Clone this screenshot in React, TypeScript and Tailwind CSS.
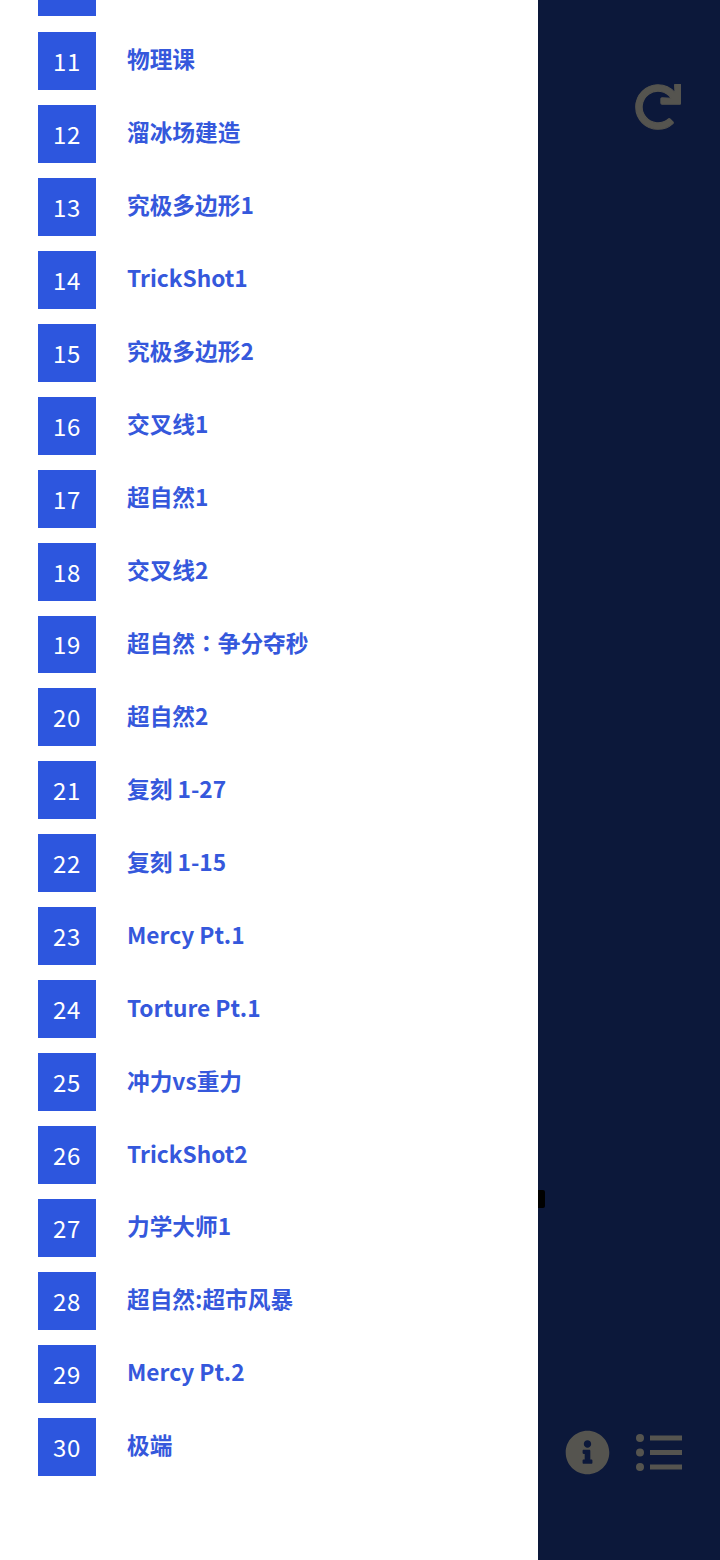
import React from 'react';
import { FaInfoCircle, FaRedo } from 'react-icons/fa';

const levels: { id: number; name: React.ReactNode }[] = [
  { id: 11, name: '物理课' },
  { id: 12, name: '溜冰场建造' },
  { id: 13, name: '究极多边形1' },
  { id: 14, name: 'TrickShot1' },
  { id: 15, name: '究极多边形2' },
  { id: 16, name: '交叉线1' },
  { id: 17, name: '超自然1' },
  { id: 18, name: '交叉线2' },
  // the full-width colon sits centered in the reference, as the TC font draws it
  { id: 19, name: <>超自然<span className="font-['Noto_Sans_CJK_TC']">：</span>争分夺秒</> },
  { id: 20, name: '超自然2' },
  { id: 21, name: '复刻 1-27' },
  { id: 22, name: '复刻 1-15' },
  { id: 23, name: 'Mercy Pt.1' },
  { id: 24, name: 'Torture Pt.1' },
  { id: 25, name: '冲力vs重力' },
  { id: 26, name: 'TrickShot2' },
  { id: 27, name: '力学大师1' },
  { id: 28, name: '超自然:超市风暴' },
  { id: 29, name: 'Mercy Pt.2' },
  { id: 30, name: '极端' },
];

function ListIcon() {
  return (
    <svg width="48" height="40" viewBox="0 0 48 40" fill="currentColor">
      <circle cx="5" cy="5" r="4" />
      <circle cx="5" cy="19.5" r="4" />
      <circle cx="5" cy="34" r="4" />
      <rect x="15" y="2.5" width="32" height="5" />
      <rect x="15" y="17" width="32" height="5" />
      <rect x="15" y="31.5" width="32" height="5" />
    </svg>
  );
}

export default function App() {
  return (
    <div className="relative flex h-[1560px] w-[720px] overflow-hidden bg-[#0c183a] font-['Noto_Sans_CJK_SC',sans-serif]">
      {/* level drawer, scrolled so row 10 is cut off at the top */}
      <div className="w-[538px] shrink-0 overflow-hidden bg-white">
        <div className="mb-[16px] ml-[38px] h-[16px] w-[58px] bg-[#2d56de]" />
        <div className="ml-[38px] flex flex-col gap-[15px]">
          {levels.map((level) => (
            <div key={level.id} className="flex h-[57.95px] items-center">
              <div className="flex h-[57.95px] w-[58px] shrink-0 items-center justify-center text-[24px] tracking-[0.8px] text-white bg-[#2d56de]">
                {level.id}
              </div>
              <span className="ml-[31px] -mt-[3px] text-[22.7px] font-bold text-[#3558dc]">{level.name}</span>
            </div>
          ))}
        </div>
      </div>

      {/* game panel behind the drawer */}
      <div className="flex flex-1 flex-col justify-between pt-[84px] pb-[85px] pr-[37px] text-[#55544f]">
        <div className="flex justify-end">
          <FaRedo className="mr-[2px] h-[46px] w-[46px]" stroke="currentColor" strokeWidth={12} />
        </div>
        <div className="flex items-center justify-end gap-[25px]">
          <FaInfoCircle className="h-[45px] w-[45px]" />
          <ListIcon />
        </div>
      </div>

      <div className="absolute left-[538px] top-[1190px] h-[18px] w-[7px] rounded-r-[2px] bg-black" />
    </div>
  );
}
